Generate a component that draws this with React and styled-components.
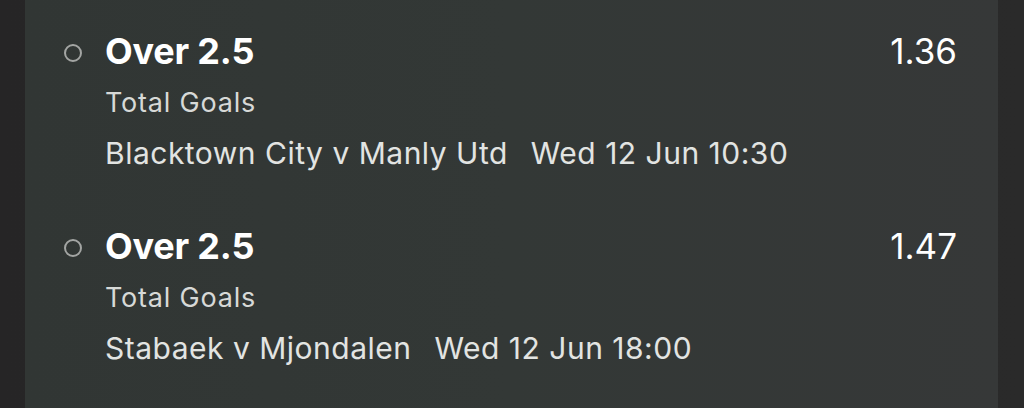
import styled, { createGlobalStyle } from "styled-components";

const GlobalStyle = createGlobalStyle`
  html, body {
    margin: 0;
    padding: 0;
    background: #262526;
  }
  body {
    font-family: Inter, "Noto Sans", "Liberation Sans", sans-serif;
    -webkit-font-smoothing: antialiased;
  }
`;

const Page = styled.main`
  display: flex;
  height: 408px;
  overflow: hidden;
  background: linear-gradient(90deg, #262526 0%, #2a2a2a 100%);
  padding: 0 26px 0 25px;
`;

const Card = styled.section`
  flex: 1;
  display: flex;
  flex-direction: column;
  gap: 47px;
  padding: 27px 41px 0 39px;
  background: linear-gradient(90deg, #313634 0%, #333836 50%, #363838 100%);
`;

const Selection = styled.div`
  display: grid;
  grid-template-columns: 41px 1fr auto;
  align-items: start;
`;

const Radio = styled.span`
  box-sizing: border-box;
  width: 18px;
  height: 18px;
  margin-top: 17px;
  border: 2.5px solid #a3a5a3;
  border-radius: 50%;
`;

const Details = styled.div`
  display: flex;
  flex-direction: column;
`;

const Title = styled.h3`
  margin: 0;
  font-size: 36px;
  line-height: 48px;
  font-weight: 700;
  color: #ffffff;
  letter-spacing: -0.2px;
`;

const Market = styled.p`
  margin: 0;
  font-size: 27px;
  line-height: 56px;
  font-weight: 400;
  color: #d7d9d7;
  letter-spacing: 0.8px;
`;

const Fixture = styled.p`
  margin: 0;
  font-size: 30px;
  line-height: 44px;
  font-weight: 400;
  color: #e2e4e2;
  letter-spacing: 0.5px;
  display: flex;
  gap: 23px;
`;

const Odds = styled.span`
  font-size: 35px;
  line-height: 48px;
  font-weight: 400;
  color: #ffffff;
`;

const bets = [
  {
    pick: "Over 2.5",
    market: "Total Goals",
    match: "Blacktown City v Manly Utd",
    kickoff: "Wed 12 Jun 10:30",
    price: "1.36",
  },
  {
    pick: "Over 2.5",
    market: "Total Goals",
    match: "Stabaek v Mjondalen",
    kickoff: "Wed 12 Jun 18:00",
    price: "1.47",
  },
];

function App() {
  return (
    <>
      <GlobalStyle />
      <Page>
        <Card>
          {bets.map((bet, i) => (
            <Selection key={`bet-${i}`}>
              <Radio />
              <Details>
                <Title>{bet.pick}</Title>
                <Market>{bet.market}</Market>
                <Fixture>
                  <span>{bet.match}</span>
                  <span>{bet.kickoff}</span>
                </Fixture>
              </Details>
              <Odds>{bet.price}</Odds>
            </Selection>
          ))}
        </Card>
      </Page>
    </>
  );
}

export default App;
